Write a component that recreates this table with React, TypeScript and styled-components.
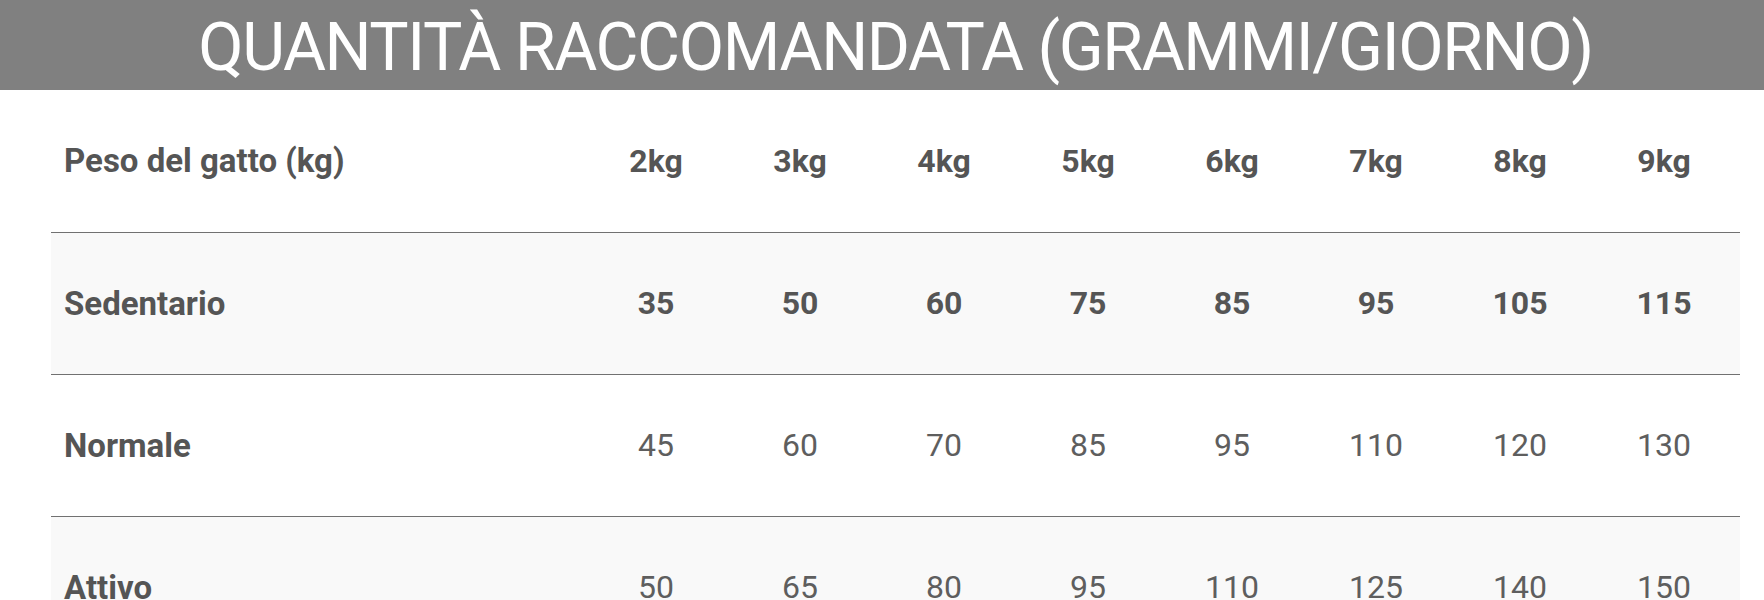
import * as React from 'react';
import styled, { createGlobalStyle } from 'styled-components';

type Row = { label: string; values: number[]; strong?: boolean; shaded?: boolean };

const weights = [2, 3, 4, 5, 6, 7, 8, 9];

const rows: Row[] = [
  { label: 'Sedentario', values: [35, 50, 60, 75, 85, 95, 105, 115], strong: true, shaded: true },
  { label: 'Normale', values: [45, 60, 70, 85, 95, 110, 120, 130] },
  { label: 'Attivo', values: [50, 65, 80, 95, 110, 125, 140, 150], shaded: true },
];

export default function App() {
  return (
    <>
      <GlobalStyle />
      <Banner>
        <Title>QUANTITÀ RACCOMANDATA (GRAMMI/GIORNO)</Title>
      </Banner>
      <Content>
        <Table>
          <colgroup>
            <col style={{ width: 533 }} />
            {weights.map((w) => (
              <col key={w} style={{ width: 144 }} />
            ))}
            <col style={{ width: 4 }} />
          </colgroup>
          <thead>
            <tr>
              <LabelCell as="th">Peso del gatto (kg)</LabelCell>
              {weights.map((w) => (
                <ValueCell as="th" key={w} $strong>
                  {w}kg
                </ValueCell>
              ))}
              <EdgeCell as="th" />
            </tr>
          </thead>
          <tbody>
            {rows.map((row) => (
              <BodyRow key={row.label} $shaded={row.shaded}>
                <LabelCell>{row.label}</LabelCell>
                {row.values.map((v, i) => (
                  <ValueCell key={i} $strong={row.strong}>
                    {v}
                  </ValueCell>
                ))}
                <EdgeCell />
              </BodyRow>
            ))}
          </tbody>
        </Table>
      </Content>
    </>
  );
}

const GlobalStyle = createGlobalStyle`
  * {
    margin: 0;
    padding: 0;
    box-sizing: border-box;
  }
  body {
    background: #ffffff;
    font-family: Roboto, "Liberation Sans", Arial, sans-serif;
    overflow: hidden;
  }
`;

const Banner = styled.header`
  background: #808080;
  height: 90px;
  padding: 6px 24px 0 51px;
  display: flex;
  align-items: center;
  justify-content: center;
`;

const Title = styled.h1`
  color: #ffffff;
  font-family: Roboto, "Liberation Sans", sans-serif;
  font-weight: 400;
  font-size: 66px;
  letter-spacing: -1.4px;
  line-height: 84px;
  white-space: nowrap;
`;

const Content = styled.main`
  padding: 0 24px 0 51px;
`;

const Table = styled.table`
  width: 1689px;
  border-collapse: collapse;
  table-layout: fixed;
  color: #555555;
  font-size: 32px;
`;

const BodyRow = styled.tr<{ $shaded?: boolean }>`
  background: ${(p) => (p.$shaded ? '#f9f9f9' : '#ffffff')};
  border-top: 1px solid #717171;
`;

const LabelCell = styled.td`
  height: 142px;
  padding-left: 13px;
  text-align: left;
  font-size: 33px;
  font-weight: 700;
  vertical-align: middle;
`;

const ValueCell = styled.td<{ $strong?: boolean }>`
  height: 142px;
  text-align: center;
  vertical-align: middle;
  font-weight: ${(p) => (p.$strong ? 700 : 400)};
  color: ${(p) => (p.$strong ? '#555555' : '#5e5e5e')};
`;

const EdgeCell = styled.td`
  height: 142px;
`;
